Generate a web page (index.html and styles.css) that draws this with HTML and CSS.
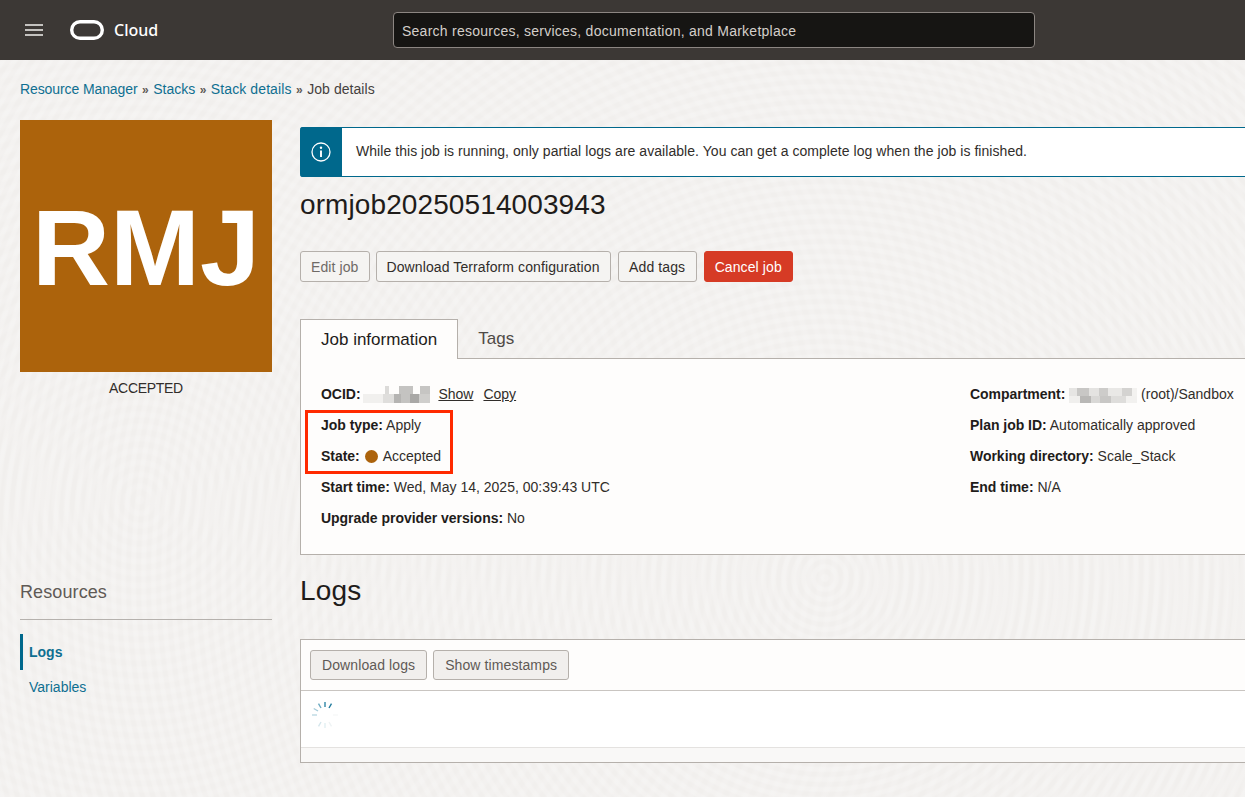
FILE: index.html
```html
<!DOCTYPE html>
<html lang="en">
<head>
    <meta charset="UTF-8">
    <meta name="viewport" content="width=device-width, initial-scale=1.0">
    <title>Job details</title>
    <link rel="stylesheet" href="styles.css">
</head>
<body>
<header class="topbar">
    <button class="menu-btn" aria-label="Menu">
        <svg width="18" height="12" viewBox="0 0 18 12"><path d="M0 1h18M0 6h18M0 11h18" stroke="#f1efed" stroke-width="1.6" fill="none"/></svg>
    </button>
    <svg class="logo" width="34" height="20" viewBox="0 0 34 20"><rect x="1.7" y="1.7" width="30.6" height="16.6" rx="8.3" fill="none" stroke="#fff" stroke-width="3.4"/></svg>
    <span class="brand">Cloud</span>
    <div class="search">Search resources, services, documentation, and Marketplace</div>
</header>

<nav class="breadcrumb">
    <a href="#">Resource Manager</a><span class="sep">»</span><a href="#">Stacks</a><span class="sep">»</span><a href="#">Stack details</a><span class="sep">»</span><span class="current">Job details</span>
</nav>

<div class="page">
    <aside class="side">
        <div class="tile">RMJ</div>
        <div class="tile-caption">ACCEPTED</div>
        <h3 class="res-title">Resources</h3>
        <ul class="res-list">
            <li class="active"><a href="#">Logs</a></li>
            <li><a href="#">Variables</a></li>
        </ul>
    </aside>

    <main class="content">
        <div class="alert">
            <div class="alert-icon">
                <svg width="20" height="20" viewBox="0 0 20 20"><circle cx="10" cy="10" r="9" fill="none" stroke="#fff" stroke-width="1.3"/><circle cx="10" cy="5.8" r="1.2" fill="#fff"/><path d="M10 8.5v6.5" stroke="#fff" stroke-width="1.9"/></svg>
            </div>
            <p>While this job is running, only partial logs are available. You can get a complete log when the job is finished.</p>
        </div>

        <h1>ormjob20250514003943</h1>

        <div class="actions">
            <button class="btn disabled">Edit job</button>
            <button class="btn">Download Terraform configuration</button>
            <button class="btn wide">Add tags</button>
            <button class="btn danger">Cancel job</button>
        </div>

        <div class="tabs">
            <div class="tab active">Job information</div>
            <div class="tab">Tags</div>
        </div>
        <section class="info">
            <div class="info-col">
                <div class="row"><b>OCID:</b> <span class="blur blur-a"></span><a class="link first" href="#">Show</a><a class="link" href="#">Copy</a></div>
                <div class="row"><b>Job type:</b> Apply</div>
                <div class="row"><b>State:</b> <span class="dot"></span> Accepted</div>
                <div class="row"><b>Start time:</b> Wed, May 14, 2025, 00:39:43 UTC</div>
                <div class="row"><b>Upgrade provider versions:</b> No</div>
                <div class="highlight"></div>
            </div>
            <div class="info-col">
                <div class="row"><b>Compartment:</b> <span class="blur blur-b"></span> (root)/Sandbox</div>
                <div class="row"><b>Plan job ID:</b> Automatically approved</div>
                <div class="row"><b>Working directory:</b> Scale_Stack</div>
                <div class="row"><b>End time:</b> N/A</div>
            </div>
        </section>

        <h2>Logs</h2>

        <section class="logs">
            <div class="logs-bar">
                <button class="btn muted">Download logs</button>
                <button class="btn muted">Show timestamps</button>
            </div>
            <div class="logs-body">
                <svg width="28" height="28" viewBox="0 0 28 28" fill="none" stroke-width="1.4">
                    <path d="M14 1v5" stroke="#2f86a6"/>
                    <path d="M20.5 2.7l-2.5 4.3" stroke="#1f7a9c"/>
                    <path d="M7.5 2.7l2.5 4.3" stroke="#6aa8c0"/>
                    <path d="M2.7 7.5l4.3 2.5" stroke="#a6cbd9"/>
                    <path d="M1 14h5" stroke="#bcd8e2"/>
                    <path d="M7.5 25.3l2.5-4.3" stroke="#d4e6ec"/>
                    <path d="M14 27v-5" stroke="#e2eff3"/>
                    <path d="M20.5 25.3l-2.5-4.3" stroke="#eef3f4"/>
                    <path d="M27 14h-5" stroke="#f6f8f8"/>
                </svg>
            </div>
            <div class="logs-foot"></div>
        </section>
    </main>
</div>
</body>
</html>
```

FILE: styles.css
```css
* {
    box-sizing: border-box;
}
html, body {
    margin: 0;
    height: 100%;
}
body {
    font-family: 'Liberation Sans', Arial, sans-serif;
    font-size: 14px;
    color: #312d2a;
    overflow: hidden;
    background-color: #f1efed;
    background-image:
        repeating-radial-gradient(circle at 825px 578px, rgba(255,255,255,0.2) 0 3px, rgba(255,255,255,0) 5px 8px, rgba(255,255,255,0.2) 10px),
        repeating-radial-gradient(circle at 140px 500px, rgba(255,255,255,0.14) 0 3px, rgba(255,255,255,0) 6px 9px, rgba(255,255,255,0.14) 12px);
}
a {
    color: #0f6f91;
    text-decoration: none;
}
.topbar {
    height: 60px;
    background-color: #3c3835;
    display: flex;
    align-items: center;
    padding-left: 25px;
}
.menu-btn {
    background: none;
    border: none;
    padding: 0;
    width: 18px;
    height: 12px;
    display: flex;
}
.logo {
    margin-left: 27px;
}
.brand {
    margin-left: 10px;
    width: 279px;
    color: #fff;
    font-family: 'Noto Sans', sans-serif;
    font-size: 16px;
    font-weight: 500;
}
.search {
    width: 642px;
    height: 36px;
    padding-left: 8px;
    line-height: 36px;
    background-color: #161513;
    border: 1px solid #8c8682;
    border-radius: 4px;
    color: #d4cfca;
    font-size: 14px;
    letter-spacing: 0.25px;
}
.breadcrumb {
    padding: 21px 20px 0;
    height: 60px;
    line-height: 16px;
}
.breadcrumb a:first-child {
    letter-spacing: -0.1px;
}
.breadcrumb a:nth-of-type(3) {
    letter-spacing: 0.1px;
}
.breadcrumb .current {
    color: #45413e;
    letter-spacing: 0.05px;
}
.breadcrumb .sep {
    margin: 0 4.5px;
    font-size: 12px;
    font-weight: bold;
    color: #5f5a56;
}
.page {
    display: flex;
    gap: 28px;
    padding-left: 20px;
}
.side {
    width: 252px;
    flex: none;
}
.tile {
    width: 252px;
    height: 252px;
    background-color: #ac630c;
    color: #fff;
    font-size: 108px;
    font-weight: bold;
    text-align: center;
    line-height: 256px;
}
.tile-caption {
    margin-top: 8px;
    text-align: center;
    line-height: 16px;
    letter-spacing: -0.3px;
}
.res-title {
    margin: 185px 0 0;
    padding-bottom: 16px;
    border-bottom: 1px solid #b5b1ad;
    font-size: 18px;
    font-weight: normal;
    letter-spacing: 0.1px;
    line-height: 22px;
    color: #5f5a56;
}
.res-list {
    list-style: none;
    margin: 14px 0 0;
    padding: 0;
}
.res-list li {
    height: 34px;
    line-height: 34px;
    padding-left: 9px;
}
.res-list li.active {
    height: 36px;
    line-height: 36px;
    border-left: 3px solid #00688c;
    padding-left: 6px;
    font-weight: bold;
}
.content {
    flex: 1;
    min-width: 0;
    padding-top: 7px;
}
.alert {
    display: flex;
    height: 50px;
    background-color: #fff;
    border-top: 1px solid #00688c;
    border-bottom: 1px solid #00688c;
    border-radius: 3px 0 0 3px;
}
.alert-icon {
    width: 42px;
    margin: -1px 0;
    background-color: #00688c;
    border-radius: 3px 0 0 3px;
    display: flex;
    align-items: center;
    justify-content: center;
}
.alert p {
    margin: 0;
    padding-left: 14px;
    line-height: 47px;
    font-size: 14px;
    letter-spacing: 0.05px;
    white-space: nowrap;
}
h1 {
    margin: 12px 0 0;
    font-size: 28px;
    font-weight: normal;
    letter-spacing: 0.1px;
    line-height: 32px;
    color: #1f1c1a;
}
.actions {
    display: flex;
    gap: 7px;
    margin-top: 30px;
}
.btn {
    height: 31px;
    padding: 0 10px;
    background-color: #f5f4f2;
    border: 1px solid #b5b0ab;
    border-radius: 3px;
    font-family: inherit;
    font-size: 14px;
    letter-spacing: 0.1px;
    color: #312d2a;
}
.btn.wide {
    padding: 0 10.5px;
}
.btn.disabled {
    margin-right: -1px;
    color: #6f6a66;
}
.btn.muted {
    height: 30px;
    padding: 0 11px;
    background-color: #f1efed;
    color: #5f5a56;
}
.btn.danger {
    background-color: #d63b25;
    border-color: #d63b25;
    color: #fff;
}
.tabs {
    display: flex;
    margin-top: 37px;
    height: 40px;
}
.tab {
    padding: 0 20px;
    font-size: 17px;
    line-height: 39px;
    color: #4f4a46;
}
.tab.active {
    background-color: #fefdfc;
    border: 1px solid #b5b0ab;
    border-bottom: none;
    color: #1f1c1a;
    position: relative;
    z-index: 1;
}
.info {
    display: flex;
    height: 197px;
    margin-top: -1px;
    padding-top: 20px;
    background-color: #fefdfc;
    border: 1px solid #b5b0ab;
    border-right: none;
}
.info-col {
    width: 649px;
    flex: none;
    padding-left: 20px;
    position: relative;
}
.info-col + .info-col {
    flex: 1;
    width: auto;
    min-width: 0;
}
.row {
    height: 31px;
    line-height: 31px;
    white-space: nowrap;
}
.row b {
    color: #1f1c1a;
    letter-spacing: -0.03px;
}
.blur {
    display: inline-block;
    height: 17px;
    vertical-align: -4px;
    background-repeat: no-repeat;
}
.blur-a {
    width: 67px;
    margin-left: -1px;
    background-image:
        linear-gradient(90deg, #dcdbd9 0 8%, transparent 8% 32%, #c4c3c1 32% 62%, transparent 62% 78%, #c6c5c3 78%),
        linear-gradient(90deg, #f1f0ee 0 30%, #dfdedc 30% 46%, #b5b4b2 46% 56%, #c4c3c1 56% 70%, #a9a8a6 70% 84%, #cfcecc 84%);
    background-position: 22px 0, 0 8px;
    background-size: 45px 8px, 67px 9px;
}
.blur-b {
    width: 68px;
    background-image:
        linear-gradient(90deg, #e6e5e3 0 12%, #c8c7c5 12% 30%, #e4e3e1 30% 44%, #cdccca 44% 58%, #e9e8e6 58% 78%, #d4d3d1 78% 92%, #f3f2f0 92%),
        linear-gradient(90deg, #f0efed 0 16%, #b9b8b6 16% 32%, #d9d8d6 32% 46%, #c8c7c5 46% 62%, #dedddb 62% 84%, #f2f1ef 84%);
    background-position: 0 2px, 0 10px;
    background-size: 68px 8px, 68px 7px;
}
.link {
    color: #312d2a;
    text-decoration: underline;
    margin-left: 10px;
}
.link.first {
    margin-left: 8px;
}
.dot {
    display: inline-block;
    width: 13px;
    height: 13px;
    margin: 0 2px 0 1px;
    vertical-align: -2px;
    background-color: #ac630c;
    border-radius: 50%;
}
.highlight {
    position: absolute;
    left: 4px;
    top: 31px;
    width: 148px;
    height: 64px;
    border: 3px solid #ff2a00;
}
h2 {
    margin: 18px 0 0;
    font-size: 28px;
    font-weight: normal;
    letter-spacing: 0.2px;
    line-height: 36px;
    color: #1f1c1a;
}
.logs {
    margin-top: 30px;
    height: 124px;
    background-color: #fff;
    border: 1px solid #b5b0ab;
    border-right: none;
    display: flex;
    flex-direction: column;
}
.logs-bar {
    display: flex;
    gap: 6px;
    height: 51px;
    padding: 10px 9px 0;
    background-color: #fefdfc;
    border-bottom: 1px solid #c9c5c1;
}
.logs-body {
    flex: 1;
    padding: 10px 0 0 10px;
}
.logs-foot {
    height: 15px;
    background-color: #f9f8f7;
    border-top: 1px solid #e4e2e0;
}
```
